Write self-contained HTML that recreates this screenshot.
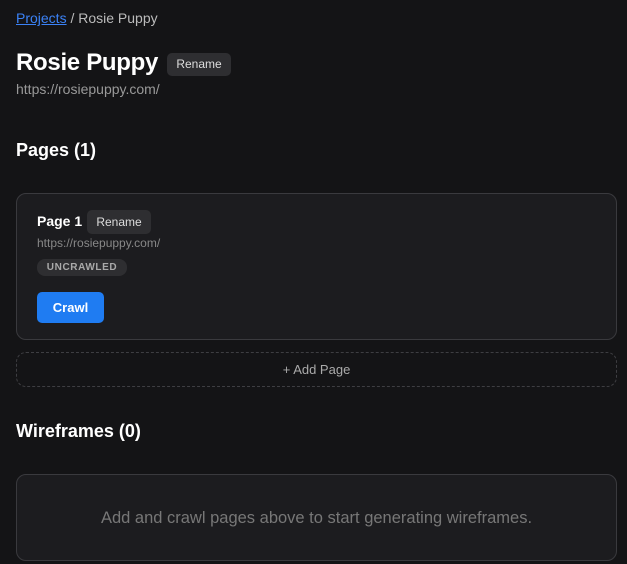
<!DOCTYPE html><html><head><style>
*{margin:0;padding:0;box-sizing:border-box}
body{width:627px;height:564px;background:#141416;font-family:"Liberation Sans",sans-serif;color:#fff;position:relative;overflow:hidden}
.a{position:absolute;white-space:nowrap}
.btn{background:#2e2e31;color:#ddd;border-radius:5px;font-size:12px;text-align:center}
</style></head><body>
<div class="a" style="left:16px;top:10px;font-size:14px;color:#bbb"><span style="color:#3b82f6;text-decoration:underline">Projects</span> / Rosie Puppy</div>
<div class="a" style="left:16px;top:49px;font-size:24px;font-weight:bold;letter-spacing:-0.3px">Rosie Puppy</div>
<div class="a btn" style="left:167px;top:53px;width:64px;height:23px;line-height:23px">Rename</div>
<div class="a" style="left:16px;top:81px;font-size:14px;color:#999">https://rosiepuppy.com/</div>
<div class="a" style="left:16px;top:140px;font-size:18px;font-weight:bold">Pages (1)</div>
<div class="a" style="left:16px;top:193px;width:601px;height:147px;background:#1c1c1f;border:1px solid #3a3a3e;border-radius:10px"></div>
<div class="a" style="left:37px;top:213px;font-size:14px;font-weight:bold">Page 1</div>
<div class="a btn" style="left:87px;top:210px;width:64px;height:24px;line-height:24px">Rename</div>
<div class="a" style="left:37px;top:236px;font-size:12px;color:#888">https://rosiepuppy.com/</div>
<div class="a" style="left:37px;top:259px;width:90px;height:17px;line-height:17px;background:#2e2e31;border-radius:8px;font-size:10px;font-weight:bold;color:#aaa;text-align:center;letter-spacing:.6px">UNCRAWLED</div>
<div class="a" style="left:37px;top:292px;width:67px;height:31px;line-height:31px;background:#1f7cf2;border-radius:5px;font-size:13px;font-weight:bold;text-align:center">Crawl</div>
<div class="a" style="left:16px;top:352px;width:601px;height:35px;border:1px dashed #3e3e42;border-radius:10px;text-align:center;line-height:33px;font-size:13px;color:#aaa">+ Add Page</div>
<div class="a" style="left:16px;top:421px;font-size:18px;font-weight:bold">Wireframes (0)</div>
<div class="a" style="left:16px;top:474px;width:601px;height:87px;background:#1c1c1f;border:1px solid #3a3a3e;border-radius:10px;text-align:center;line-height:87px;font-size:16.5px;color:#777">Add and crawl pages above to start generating wireframes.</div>
</body></html>
